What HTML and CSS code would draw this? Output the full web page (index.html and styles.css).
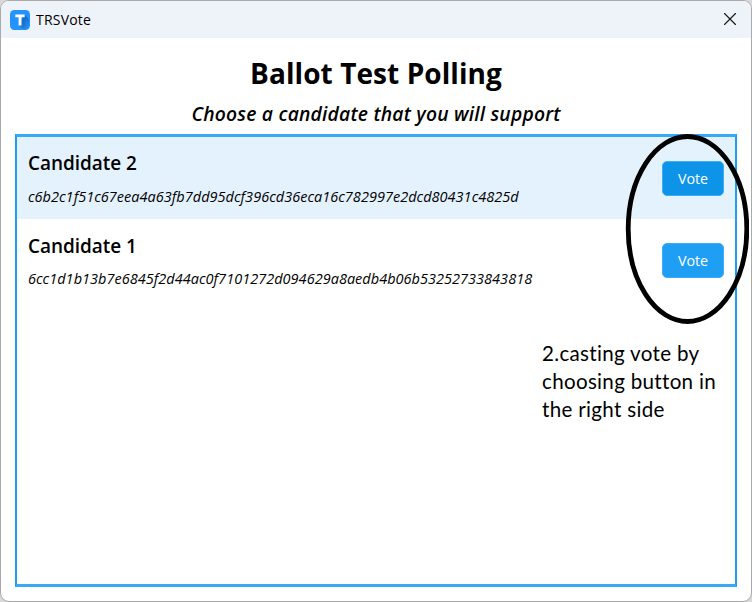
FILE: index.html
```html
<!DOCTYPE html>
<html lang="en">
<head>
<meta charset="utf-8">
<title>TRSVote</title>
<link rel="stylesheet" href="styles.css">
</head>
<body>
<div class="window">
  <header class="titlebar">
    <svg class="logo" width="20" height="20" viewBox="0 0 20 20">
      <defs><linearGradient id="shade" x1="0" y1="0" x2="1" y2="1"><stop offset="0.3" stop-color="#1267bd"/><stop offset="1" stop-color="#2492ff"/></linearGradient></defs>
      <rect width="20" height="20" rx="4.5" fill="#2492ff"/>
      <path d="M14.5 4.5 19 9V15.5Q19 19 15.5 19H13L9 15.5Z" fill="url(#shade)"/>
      <path d="M5.3 4.5H14.7V7.2H11.5V15.6H8.6V7.2H5.3Z" fill="#fff"/>
    </svg>
    <span class="app-name">TRSVote</span>
    <svg class="close" width="12" height="12" viewBox="0 0 12 12"><path d="M.5.5 11.5 11.5M11.5.5.5 11.5" stroke="#1a1a1a" stroke-width="1.2" stroke-linecap="round"/></svg>
  </header>
  <main class="content">
    <h1 class="title">Ballot Test Polling</h1>
    <p class="subtitle">Choose a candidate that you will support</p>
    <section class="list">
      <article class="row selected">
        <div class="info"><h2 class="name">Candidate 2</h2><p class="hash">c6b2c1f51c67eea4a63fb7dd95dcf396cd36eca16c782997e2dcd80431c4825d</p></div>
        <button class="vote pressed">Vote</button>
      </article>
      <article class="row">
        <div class="info"><h2 class="name">Candidate 1</h2><p class="hash">6cc1d1b13b7e6845f2d44ac0f7101272d094629a8aedb4b06b53252733843818</p></div>
        <button class="vote">Vote</button>
      </article>
    </section>
  </main>
  <svg class="ring" width="124" height="192" viewBox="0 0 124 192"><ellipse cx="62.5" cy="96" rx="59.3" ry="92.5" fill="none" stroke="#000" stroke-width="4.8"/></svg>
  <p class="note">2.casting vote by<br>choosing button in<br>the right side</p>
</div>
</body>
</html>
```
FILE: styles.css
```css
* { box-sizing: border-box; }
body { margin: 0; background: #d8d8d8; font-family: "Open Sans", "Noto Sans", sans-serif; color: #000; overflow: hidden; }
h1, h2, p { margin: 0; font-weight: 400; white-space: nowrap; }
.window { position: relative; width: 752px; height: 602px; display: flex; flex-direction: column; border: 1px solid #a9a9a9; border-radius: 9px; background: #fff; overflow: hidden; }
.titlebar { height: 37px; flex: none; display: flex; align-items: center; padding: 0 15px 0 9px; background: #eef3f9; }
.app-name { margin-left: 6px; font-size: 14px; letter-spacing: 0.2px; }
.close { margin-left: auto; margin-top: -1px; }
.content { flex: 1; display: flex; flex-direction: column; padding: 13px 14px 14px; }
.title { height: 44px; line-height: 44px; text-align: center; font-size: 28px; font-weight: 700; letter-spacing: 0.08px; }
.subtitle { height: 39px; line-height: 38px; text-align: center; font-size: 19.3px; font-weight: 540; font-style: italic; letter-spacing: 0.2px; }
.list { flex: 1; border: 2px solid #1e9ff2; border-top: 3px solid #37aaf5; border-bottom: 3px solid #37aaf5; }
.row { height: 83px; display: flex; justify-content: space-between; align-items: flex-start; padding: 10px 12px 0 11px; }
.selected { height: 82px; background: #e4f2fe; }
.name { height: 32px; line-height: 35px; font-size: 19px; font-weight: 580; letter-spacing: -0.05px; }
.selected .name { line-height: 33px; }
.hash { height: 34px; line-height: 35px; font-size: 14.5px; font-style: italic; letter-spacing: 0.025px; }
.vote { width: 62px; height: 35px; margin: 14px -1px 0 0; padding: 0; border: 1px solid #3cacf8; border-radius: 5px; background: #1e9ff4; color: #fff; font: 14.3px "Open Sans", sans-serif; }
.pressed { background: #0d94e8; }
.ring { position: absolute; left: 624px; top: 132px; }
.note { position: absolute; left: 541px; top: 338px; font: 20.6px/28px Lato, sans-serif; font-variant-ligatures: none; letter-spacing: 0.3px; }
```
